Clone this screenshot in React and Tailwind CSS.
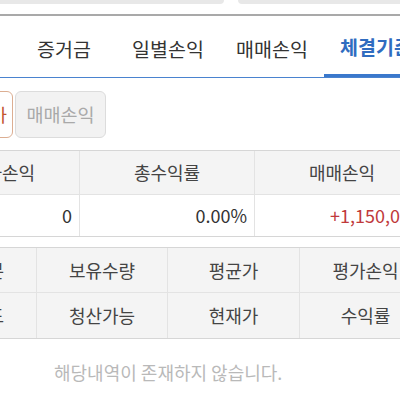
import React from 'react';

const tabs = ['주문가능', '증거금', '일별손익', '매매손익', '체결기준'];

const Cell = ({ w, children, className = '' }) => (
    <div className={`${w} shrink-0 flex items-center border-r border-[#e3e3e3] ${className}`}>
        {children}
    </div>
);

export default function App() {
    return (
        <div className="w-[400px] h-[400px] overflow-hidden bg-white text-[#333] font-['Noto_Sans_CJK_KR','Noto_Sans',sans-serif]">
            {/* search boxes (bottom edge only) */}
            <div className="flex h-[4px] gap-[14px]">
                <div className="w-[224px] bg-[#e8e8e8] rounded-br-[10px]" />
                <div className="flex-1 bg-[#e8e8e8] rounded-bl-[10px]" />
            </div>
            <div className="h-[10px]" />
            <div className="h-[2px] bg-[#a9a9a9]" />

            {/* tabs */}
            <div className="h-[62px] border-b-[1.5px] border-[#4a83cf] overflow-hidden">
                <div className="flex ml-[-92px] h-full">
                    {tabs.map((t, i) => (
                        <div
                            key={t}
                            className={`w-[104px] shrink-0 flex items-center justify-center text-[19.5px] whitespace-nowrap pt-[4px] ${
                                i === 4
                                    ? 'text-[#2f6cc0] font-bold border-b-[3px] border-[#3a78cc]'
                                    : 'text-[#333]'
                            }`}
                        >
                            {t}
                        </div>
                    ))}
                </div>
            </div>

            {/* sub buttons */}
            <div className="flex gap-[2px] ml-[-78px] mt-[13px] h-[47px]">
                <div className="w-[91px] shrink-0 flex items-center justify-end pr-[5px] border border-[#dcae92] rounded-[6px] text-[18.5px] text-[#c4562c]">
                    잔고평가
                </div>
                <div className="w-[91px] shrink-0 flex items-center justify-center border border-[#dcdcdc] bg-[#f2f2f2] rounded-[6px] text-[18.5px] text-[#a9a9a9]">
                    매매손익
                </div>
            </div>

            {/* summary table */}
            <div className="mt-[12px] border-t border-b border-[#d6d6d6] overflow-hidden">
                <div className="flex ml-[-75px] h-[44px] bg-[#f4f4f4] border-b border-[#e3e3e3] text-[18px] text-[#444]">
                    <Cell w="w-[155px]" className="justify-center">평가손익</Cell>
                    <Cell w="w-[175px]" className="justify-center">총수익률</Cell>
                    <Cell w="w-[175px]" className="justify-center">매매손익</Cell>
                </div>
                <div className="flex ml-[-75px] h-[41px] text-[18px]">
                    <Cell w="w-[155px]" className="justify-end pr-[7px]">0</Cell>
                    <Cell w="w-[175px]" className="justify-end pr-[7px]">0.00%</Cell>
                    <Cell w="w-[175px]" className="justify-end pr-[9px] text-[#c0393b]">+1,150,000</Cell>
                </div>
            </div>

            {/* holdings header */}
            <div className="mt-[10px] border-t border-b border-[#d6d6d6] bg-[#f4f4f4] overflow-hidden text-[18px] text-[#444]">
                <div className="flex ml-[-94px] h-[45px] border-b border-[#e3e3e3]">
                    <Cell w="w-[131px]" className="justify-center">매매구분</Cell>
                    <Cell w="w-[131px]" className="justify-center">보유수량</Cell>
                    <Cell w="w-[132px]" className="justify-center">평균가</Cell>
                    <Cell w="w-[132px]" className="justify-center">평가손익</Cell>
                </div>
                <div className="flex ml-[-94px] h-[45px]">
                    <Cell w="w-[131px]" className="justify-center">종목코드</Cell>
                    <Cell w="w-[131px]" className="justify-center">청산가능</Cell>
                    <Cell w="w-[132px]" className="justify-center">현재가</Cell>
                    <Cell w="w-[132px]" className="justify-center">수익률</Cell>
                </div>
            </div>

            <p className="mt-[20px] ml-[54px] text-[18px] text-[#b9b9b9] whitespace-nowrap">
                해당내역이 존재하지 않습니다.
            </p>
        </div>
    );
}
